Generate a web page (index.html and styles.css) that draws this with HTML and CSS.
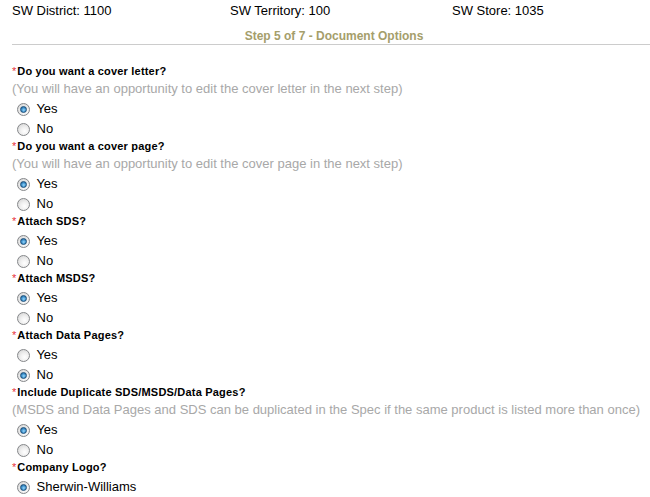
FILE: index.html
```html
<!DOCTYPE html>
<html>
<head>
<meta charset="utf-8">
<link rel="stylesheet" href="styles.css">
</head>
<body>
<div class="page">
  <div class="info">
    <span>SW District: 1100</span>
    <span>SW Territory: 100</span>
    <span>SW Store: 1035</span>
  </div>
  <div class="step">Step 5 of 7 - Document Options</div>
  <hr class="rule">
  <form class="form">
    <div class="q">
      <div class="label"><span class="req">*</span>Do you want a cover letter?</div>
      <div class="hint">(You will have an opportunity to edit the cover letter in the next step)</div>
      <label class="opt"><input type="radio" name="cl" checked> Yes</label>
      <label class="opt"><input type="radio" name="cl"> No</label>
    </div>
    <div class="q">
      <div class="label"><span class="req">*</span>Do you want a cover page?</div>
      <div class="hint">(You will have an opportunity to edit the cover page in the next step)</div>
      <label class="opt"><input type="radio" name="cp" checked> Yes</label>
      <label class="opt"><input type="radio" name="cp"> No</label>
    </div>
    <div class="q">
      <div class="label"><span class="req">*</span>Attach SDS?</div>
      <label class="opt"><input type="radio" name="sds" checked> Yes</label>
      <label class="opt"><input type="radio" name="sds"> No</label>
    </div>
    <div class="q">
      <div class="label"><span class="req">*</span>Attach MSDS?</div>
      <label class="opt"><input type="radio" name="msds" checked> Yes</label>
      <label class="opt"><input type="radio" name="msds"> No</label>
    </div>
    <div class="q">
      <div class="label"><span class="req">*</span>Attach Data Pages?</div>
      <label class="opt"><input type="radio" name="dp"> Yes</label>
      <label class="opt"><input type="radio" name="dp" checked> No</label>
    </div>
    <div class="q">
      <div class="label"><span class="req">*</span>Include Duplicate SDS/MSDS/Data Pages?</div>
      <div class="hint">(MSDS and Data Pages and SDS can be duplicated in the Spec if the same product is listed more than once)</div>
      <label class="opt"><input type="radio" name="dup" checked> Yes</label>
      <label class="opt"><input type="radio" name="dup"> No</label>
    </div>
    <div class="q">
      <div class="label"><span class="req">*</span>Company Logo?</div>
      <label class="opt"><input type="radio" name="logo" checked> Sherwin-Williams</label>
    </div>
  </form>
</div>
</body>
</html>
```

FILE: styles.css
```css
html, body {
  margin: 0;
  padding: 0;
  background: #fff;
}
body {
  font-family: "Liberation Sans", Arial, sans-serif;
  font-size: 13px;
  color: #000;
  overflow: hidden;
}
.page {
  padding-left: 12px;
}
.info {
  display: grid;
  grid-template-columns: 218px 222px 1fr;
  height: 22px;
  line-height: 21px;
}
.step {
  margin-top: 5px;
  height: 17px;
  line-height: 18px;
  text-align: center;
  font-weight: bold;
  font-size: 12px;
  color: #a59e6b;
  padding-left: 6px;
}
.rule {
  margin: 0;
  border: 0;
  border-top: 1px solid #cccccc;
  height: 0;
}
.form {
  margin-top: 17px;
  display: flex;
  flex-direction: column;
}
.q {
  display: flex;
  flex-direction: column;
}
.label {
  font-size: 11px;
  font-weight: bold;
  letter-spacing: 0.2px;
  line-height: 17px;
  height: 17px;
  padding-top: 1px;
  box-sizing: border-box;
}
.req {
  color: #e8323c;
  font-weight: normal;
  font-size: 11px;
  letter-spacing: 0;
  margin-right: 1px;
}
.hint {
  color: #a8a8a8;
  line-height: 18px;
  height: 18px;
  padding-top: 1px;
  box-sizing: border-box;
  white-space: nowrap;
}
.opt {
  display: flex;
  align-items: center;
  height: 20px;
  padding-top: 4px;
  box-sizing: border-box;
  line-height: 16px;
  white-space: pre;
}
.opt input {
  -webkit-appearance: none;
  appearance: none;
  width: 13px;
  height: 13px;
  margin: 0 3px 0 5px;
  border-radius: 50%;
  border: 1px solid #85878a;
  box-sizing: border-box;
  background: radial-gradient(circle at 60% 65%, #ffffff 0%, #f0f0f0 40%, #cfcfcf 100%);
  position: relative;
  flex: none;
}
.opt input:checked::after {
  content: "";
  position: absolute;
  left: 2px;
  top: 2px;
  width: 7px;
  height: 7px;
  border-radius: 50%;
  box-sizing: border-box;
  border: 1px solid #1d4f78;
  background: radial-gradient(circle at 55% 60%, #9ad8f8 0%, #3e92cf 50%, #1b5a8c 100%);
}
```
